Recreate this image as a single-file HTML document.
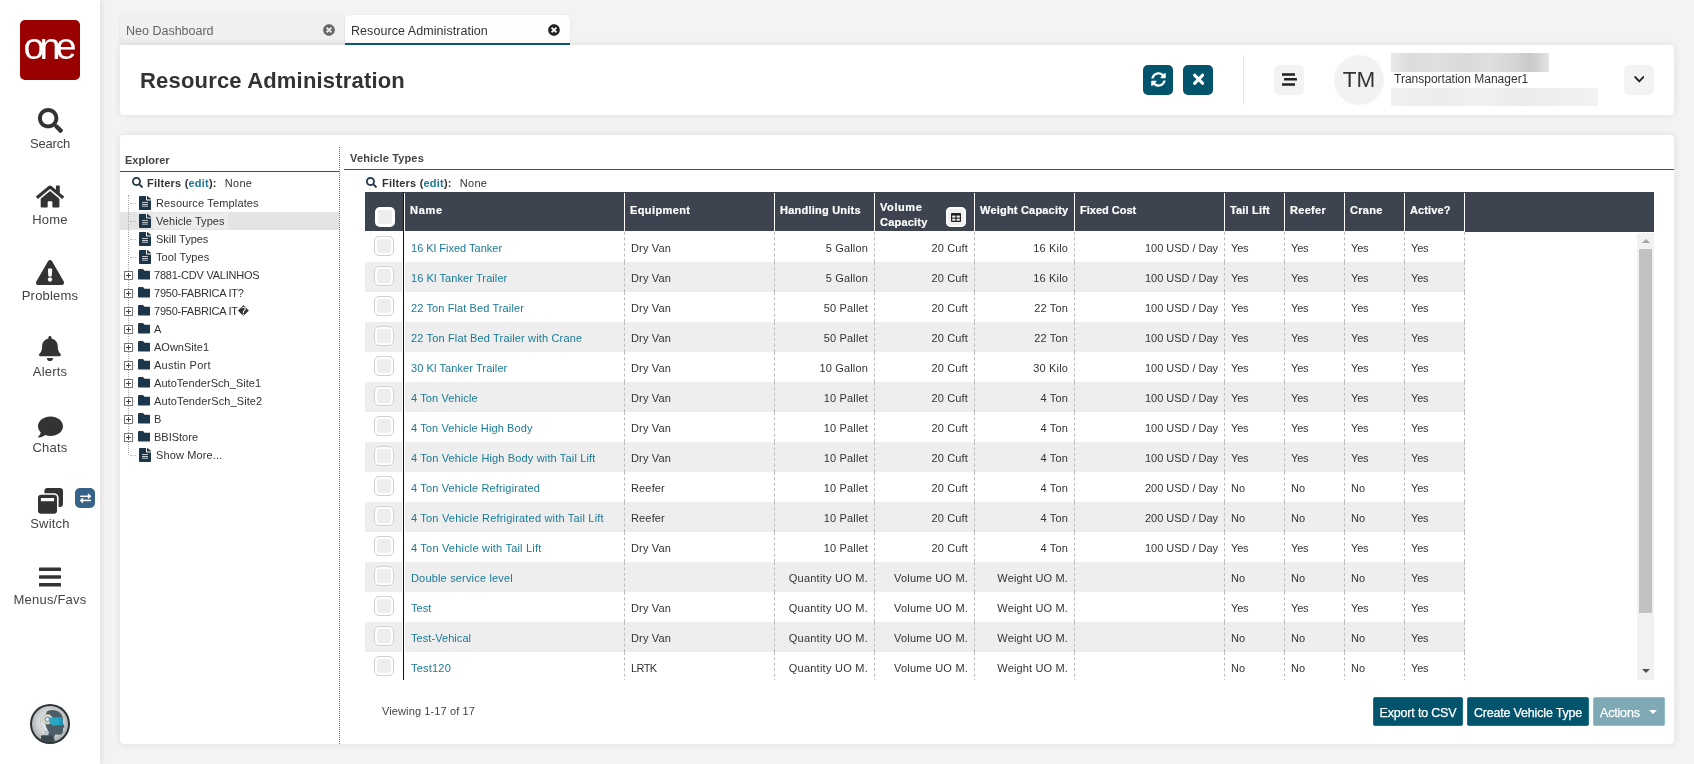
<!DOCTYPE html>
<html lang="en">
<head>
<meta charset="utf-8">
<title>Resource Administration</title>
<style>
*{box-sizing:border-box;margin:0;padding:0}
html,body{width:1694px;height:764px;overflow:hidden}
body{background:#f4f3f3;font-family:"Liberation Sans","DejaVu Sans",sans-serif;color:#333;font-size:11px;position:relative}
i{font-style:normal}
#side,.tab,.card{will-change:transform;opacity:.999}
#side{position:absolute;left:0;top:0;width:100px;height:764px;background:#fff;box-shadow:1px 0 6px rgba(60,40,40,.13)}
#logo{position:absolute;left:20px;top:20px;width:60px;height:60px;background:#990000;border-radius:5px;color:#fff;text-align:center}
#logo span{position:absolute;left:0;width:60px;top:7px;font-size:36px;letter-spacing:-4.7px;line-height:40px;text-indent:-4.7px;transform:scaleX(1.05);transform-origin:30px 50%}
.nav{position:absolute;left:0;width:100px;text-align:center;font-size:13px;color:#444;line-height:16px;letter-spacing:.2px}
.badge{position:absolute;left:75px;top:488px;width:20px;height:20px;border-radius:5px;background:#356388}
.tab{position:absolute;top:15px;height:30px;border-radius:5px 5px 0 0;font-size:12.5px;line-height:32px;padding-left:6px;white-space:nowrap}
#tab1{left:120px;width:224px;background:linear-gradient(#f1f1f1 0,#efefef 80%,#ebebeb 100%);box-shadow:0 0 2px rgba(0,0,0,.12);color:#666}
#tab2{left:345px;width:225px;background:#fff;border-bottom:2px solid #0a5a78;color:#333;box-shadow:0 0 2px rgba(0,0,0,.10);letter-spacing:.06px}
.card{position:absolute;background:#fff;border-radius:4px;box-shadow:0 0 8px rgba(60,40,40,.11)}
#hdr{left:120px;top:45px;width:1554px;height:70px;border-radius:0 4px 4px 4px}
#hdr h1{position:absolute;left:20px;top:22px;font-size:22px;font-weight:700;color:#333;line-height:28px;letter-spacing:.18px;white-space:nowrap}
.ibtn{position:absolute;top:20px;width:30px;height:30px;border-radius:5px}
.teal{background:#01546b}
.lite{background:#f3f3f3}
.vdiv{position:absolute;left:1123px;top:10px;width:1px;height:50px;background:#e9e9e9}
.ava{position:absolute;left:1214px;top:10px;width:50px;height:50px;border-radius:50%;background:#f2f2f2;color:#333;font-size:22.5px;line-height:50px;text-align:center;letter-spacing:0}
.uname{position:absolute;left:1274px;top:26px;font-size:12px;line-height:16px;color:#333;white-space:nowrap}
.blur{position:absolute;left:1271px}
.b1{top:8px;width:158px;height:19px;background:linear-gradient(90deg,#e9e9e9 0,#dcdcdc 12%,#e0e0e0 30%,#d9d9d9 48%,#dedede 62%,#d6d6d6 78%,#c9c9c9 88%,#d4d4d4 94%,#e6e6e6 100%);filter:blur(.7px)}
.b2{top:43px;width:207px;height:18px;background:linear-gradient(90deg,#f0f0f0 0,#ececec 25%,#f1f1f1 42%,#ebebeb 62%,#efefef 80%,#f2f2f2 100%);filter:blur(.7px)}
#main{left:120px;top:135px;width:1554px;height:609px}
.ptitle{position:absolute;font-weight:700;font-size:11px;color:#444;line-height:14px;white-space:nowrap}
.uline{position:absolute;height:1px;background:#17607a}
.vdot{position:absolute;left:219px;top:12px;width:0;height:597px;border-left:1px dotted #777}
.filt{position:absolute;font-size:11px;line-height:14px;color:#333;white-space:nowrap}
.filt b{color:#333;letter-spacing:.2px}
.filt .ed{color:#1a7a96}
.filt .none{margin-left:8px;letter-spacing:.35px}
.tree{position:absolute;left:0;top:59px;width:219px}
.tdot{z-index:2;position:absolute;left:8px;top:1px;width:0;height:260px;border-left:1px dotted #aaa}
.tr{position:relative;height:18px;line-height:18px;font-size:11px;color:#333;white-space:nowrap}
.tr.sel{background:#e4e4e4}
.tr .lbl{position:absolute;left:33px;top:1px;height:16px;line-height:16px;padding:0 3px}
.tr.sel .lbl{background:#ececec}
.tr.f .lbl{left:31px}
.hd{position:absolute;left:10px;top:9px;width:6px;height:0;border-top:1px dotted #bbb}
.hd2{position:absolute;left:14px;top:9px;width:1px;height:1px;background:#ccc}
.pl{z-index:3;position:absolute;left:4px;top:5px;width:9px;height:9px;border:1px solid #777;background:#fff}
.pl:before{content:"";position:absolute;left:1px;top:3px;width:5px;height:1px;background:#444}
.pl:after{content:"";position:absolute;left:3px;top:1px;width:1px;height:5px;background:#444}
#ghead{position:absolute;left:245px;top:57px;width:1289px;height:39px;background:#3d4450}
.hfill{position:absolute;left:1100px;top:0;width:189px;height:40px;background:#3d4450}
.hcb{position:absolute;left:10px;top:15px;width:20px;height:20px;border-radius:5px;background:#fff}
.hcb:after{content:"";position:absolute;left:3px;top:3px;width:14px;height:14px;border-radius:2px;background:#eee}
.hblk{position:absolute;left:38px;top:0;width:1px;height:40px;background:#111}
.hc{position:absolute;top:1px;height:39px;color:#fff;-webkit-text-stroke:.2px #fff;font-weight:700;font-size:11px;line-height:15px;letter-spacing:.3px;border-left:1px solid #fff;white-space:nowrap}
.hc span{position:absolute;left:5px;top:10px}
.hc.two span{top:7px}
.colbtn{position:absolute;left:581px;top:15px;width:20px;height:20px;border-radius:5px;background:#f0f0f0;box-shadow:inset 0 0 0 1.5px #fff}
#gbody{position:absolute;left:245px;top:97px;width:1272px;height:448px;overflow:hidden}
.row{position:absolute;left:0;width:1100px;height:30px;font-size:11px;line-height:32px;letter-spacing:.15px;color:#333;white-space:nowrap}
.row.alt{background:#eeeeee}
.c{position:absolute;top:0;height:30px;padding:0 6px;border-right:1px dashed #bcbcbc}
.c.r{padding-right:6px}
.c.r{text-align:right}
.c.n{color:#1a7a96}
.cb{position:absolute;left:9px;top:4px;width:20px;height:20px;border:1px solid #d2d2d2;border-radius:5px;background:#fff}
.cb i{position:absolute;left:2px;top:2px;width:14px;height:14px;background:#eee;border-radius:2px}
.vline{position:absolute;top:0;height:448px;width:0;border-left:1px dashed #c4c4c4}
.bline{position:absolute;left:38px;top:0;width:1px;height:448px;background:#111}
.wline{position:absolute;top:0;width:1px;height:448px;background:#fff}
#sb{position:absolute;left:1517px;top:98px;width:17px;height:447px;background:#f1f1f1}
#sb .thumb{position:absolute;left:2px;top:16px;width:13px;height:364px;background:#c1c1c1}
#sb .up{position:absolute;left:5px;top:6px;width:0;height:0;border-left:4px solid transparent;border-right:4px solid transparent;border-bottom:4px solid #a3a3a3}
#sb .dn{position:absolute;left:5px;top:436px;width:0;height:0;border-left:4px solid transparent;border-right:4px solid transparent;border-top:4px solid #505050}
.viewing{position:absolute;left:262px;top:569px;font-size:11px;line-height:14px;color:#444;white-space:nowrap}
.btn{position:absolute;top:562px;height:29px;background:#01546b;color:#fff;font-size:12.5px;letter-spacing:-.18px;line-height:31px;text-align:center;border-radius:2px;border:1px solid #16748d;white-space:nowrap;-webkit-text-stroke:.25px #fff}
.btn.dis{background:#7faab5;border-color:#8fbfcb}
.btn.dis span{position:absolute;left:6px;top:0}
.car{position:absolute;right:7px;top:12px;width:0;height:0;border-left:4px solid transparent;border-right:4px solid transparent;border-top:4px solid #fff}
</style>
</head>
<body>
<div id="side">
<div id="logo"><span>one</span></div>
<svg viewBox="0 0 512 512" preserveAspectRatio="none" style="position:absolute;left:37.5px;top:108px;width:25px;height:25px" fill="#333"><path d="M505 442.7L405.3 343c-4.5-4.5-10.6-7-17-7H372c27.6-35.3 44-79.7 44-128C416 93.1 322.9 0 208 0S0 93.1 0 208s93.1 208 208 208c48.3 0 92.7-16.4 128-44v16.3c0 6.4 2.5 12.5 7 17l99.700 99.700c9.400 9.400 24.600 9.400 33.900 0l28.300-28.300c9.400-9.400 9.400-24.600.1-34zM208 336c-70.700 0-128-57.200-128-128 0-70.700 57.200-128 128-128 70.700 0 128 57.200 128 128 0 70.700-57.200 128-128 128z"/></svg>
<div class="nav" style="top:136px;letter-spacing:-.2px">Search</div>
<svg viewBox="0 0 576 512" preserveAspectRatio="none" style="position:absolute;left:35.95px;top:184px;width:28.1px;height:25px" fill="#333"><path d="M280.37 148.26L96 300.11V464a16 16 0 0 0 16 16l112.060-.29a16 16 0 0 0 15.920-16V368a16 16 0 0 1 16-16h64a16 16 0 0 1 16 16v95.640a16 16 0 0 0 16 16.050L464 480a16 16 0 0 0 16-16V300L295.670 148.260a12.190 12.190 0 0 0-15.300 0zM571.600 251.470L488 182.560V44.050a12 12 0 0 0-12-12h-56a12 12 0 0 0-12 12v72.610L318.470 43a48 48 0 0 0-61 0L4.340 251.470a12 12 0 0 0-1.600 16.900l25.500 31A12 12 0 0 0 45.150 301l235.220-193.740a12.190 12.190 0 0 1 15.300 0L530.900 301a12 12 0 0 0 16.900-1.600l25.500-31a12 12 0 0 0-1.700-16.930z"/></svg>
<div class="nav" style="top:212px">Home</div>
<svg viewBox="0 0 576 512" preserveAspectRatio="none" style="position:absolute;left:35.95px;top:260px;width:28.1px;height:25px" fill="#333"><path d="M569.517 440.013C587.975 472.007 564.806 512 527.940 512H48.054c-36.937 0-59.999-40.055-41.577-71.987L246.423 23.985c18.467-32.009 64.720-31.951 83.154 0l239.940 416.028zM288 354c-25.405 0-46 20.595-46 46s20.595 46 46 46 46-20.595 46-46-20.595-46-46-46zm-43.673-165.346l7.418 136c.347 6.364 5.609 11.346 11.982 11.346h48.546c6.373 0 11.635-4.982 11.982-11.346l7.418-136c.375-6.874-5.098-12.654-11.982-12.654h-63.383c-6.884 0-12.356 5.780-11.981 12.654z"/></svg>
<div class="nav" style="top:288px">Problems</div>
<svg viewBox="0 0 448 512" preserveAspectRatio="none" style="position:absolute;left:39.05px;top:336px;width:21.9px;height:25px" fill="#333"><path d="M224 512c35.320 0 63.970-28.650 63.970-64H160.030c0 35.350 28.650 64 63.970 64zm215.390-149.710c-19.320-20.760-55.470-51.990-55.470-154.290 0-77.700-54.480-139.900-127.940-155.160V32c0-17.670-14.320-32-31.980-32s-31.980 14.330-31.980 32v20.840C118.560 68.100 64.080 130.300 64.080 208c0 102.300-36.150 133.530-55.470 154.290-6 6.450-8.660 14.160-8.610 21.710.11 16.400 12.980 32 32.100 32h383.800c19.120 0 32-15.600 32.100-32 .05-7.550-2.610-15.270-8.610-21.710z"/></svg>
<div class="nav" style="top:364px">Alerts</div>
<svg viewBox="0 0 512 512" preserveAspectRatio="none" style="position:absolute;left:37.5px;top:414.8px;width:25px;height:24px" fill="#333"><path d="M256 32C114.600 32 0 125.100 0 240c0 49.600 21.400 95 57 130.700C44.500 421.100 2.700 466 2.200 466.500c-2.200 2.300-2.800 5.700-1.500 8.700S4.800 480 8 480c66.300 0 116-31.800 140.600-51.400 32.700 12.300 69 19.400 107.400 19.400 141.400 0 256-93.100 256-208S397.400 32 256 32z"/></svg>
<div class="nav" style="top:440px">Chats</div>
<svg viewBox="0 0 25 26" style="position:absolute;left:38px;top:488px;width:25px;height:26px"><rect x="6.4" y="0" width="18.6" height="19" rx="3.2" fill="#333"/><rect x="-1.6" y="5.2" width="22.2" height="22.4" rx="4.6" fill="#fff"/><rect x="0" y="6.8" width="19" height="19" rx="3.2" fill="#333"/><rect x="2.9" y="10" width="13.2" height="3.2" fill="#fff"/></svg>
<div class="nav" style="top:516px">Switch</div>
<div class="badge"><svg viewBox="0 0 20 20" style="position:absolute;left:0;top:0;width:20px;height:20px" fill="none" stroke="#fff" stroke-width="1.5"><path d="M5.2 8.300H15"/><path d="M6 12.400H16"/><path d="M13.200 5.800L16.100 8.300L13.200 10.700Z" fill="#fff" stroke-width=".6"/><path d="M7.800 10L5 12.400L7.800 14.900Z" fill="#fff" stroke-width=".6"/></svg></div>
<svg viewBox="0 0 22 20" style="position:absolute;left:39px;top:567px;width:22px;height:20px" fill="#333"><rect x="0" y="0.6" width="22" height="3.4" rx=".6"/><rect x="0" y="8.3" width="22" height="3.4" rx=".6"/><rect x="0" y="16.1" width="22" height="3.4" rx=".6"/></svg>
<div class="nav" style="top:592px">Menus/Favs</div>
<svg viewBox="0 0 40 40" style="position:absolute;left:30px;top:704px;width:40px;height:40px">
<defs><radialGradient id="ag" cx="50%" cy="45%" r="55%"><stop offset="0" stop-color="#f4f4f4"/><stop offset=".6" stop-color="#d6d6d6"/><stop offset="1" stop-color="#a9adaf"/></radialGradient>
<linearGradient id="vg" x1="0" y1="0" x2="1" y2="0"><stop offset="0" stop-color="#3f9fb4"/><stop offset=".6" stop-color="#22a9c9"/><stop offset="1" stop-color="#1b93b6"/></linearGradient>
<clipPath id="ac"><circle cx="20" cy="20" r="18"/></clipPath></defs>
<circle cx="20" cy="20" r="20" fill="#2b3236"/>
<circle cx="20" cy="20" r="18" fill="url(#ag)"/>
<g clip-path="url(#ac)">
<path d="M10.600 16.500C10.600 9.800 16.500 6 22.500 6C29 6 33 10.200 33 16L33 19.500L34.600 23L33 24L33 27.200C33 29.600 31 31 28.500 30.800L25.500 30.300L24 33L25.500 39L10 39L11.500 31.500L15 31.500L15.500 27.500C12.200 24.600 10.600 20.800 10.600 16.500Z" fill="#4b5d66"/>
<path d="M10.600 16.500C10.600 11.500 13.600 8.200 17.500 6.800C15 10 14.400 14 15 18C15.600 22 17 25.200 18.500 27.500L15.500 27.500C12.200 24.600 10.600 20.800 10.600 16.500Z" fill="#dde4e7"/>
<path d="M15.500 27.500L19 27.500L18.300 31.500L15 31.500Z" fill="#c5cdd1"/>
<path d="M10 39L11.500 31.500L22 31.500L25.500 39Z" fill="#3a4850"/>
<circle cx="17.600" cy="15.300" r="5" fill="#dfe3e4" stroke="#b89a58" stroke-width=".6"/>
<circle cx="17.600" cy="15.300" r="3.100" fill="#8fa6b0"/>
<circle cx="17.600" cy="15.300" r="1.600" fill="#e9eef0"/>
<path d="M18.500 13.800L31.800 13.300C32.800 15.500 33 18.500 32.600 21L22.500 21.800C20.500 20.500 19 18 18.500 13.800Z" fill="url(#vg)"/>
</g></svg>
</div>
<div class="tab" id="tab1">Neo Dashboard<svg viewBox="0 0 512 512" preserveAspectRatio="none" style="position:absolute;left:203px;top:9px;width:12px;height:12px" fill="#666"><path d="M256 8C119 8 8 119 8 256s111 248 248 248 248-111 248-248S393 8 256 8zm121.600 313.100c4.700 4.700 4.700 12.300 0 17L338 377.600c-4.700 4.700-12.300 4.700-17 0L256 312l-65.100 65.600c-4.700 4.700-12.300 4.700-17 0L134.400 338c-4.700-4.700-4.700-12.300 0-17l65.600-65-65.600-65.100c-4.700-4.700-4.700-12.300 0-17l39.600-39.600c4.700-4.700 12.300-4.700 17 0l65 65.700 65.100-65.600c4.700-4.700 12.300-4.700 17 0l39.600 39.600c4.700 4.700 4.700 12.300 0 17L312 256l65.600 65.100z"/></svg></div>
<div class="tab" id="tab2">Resource Administration<svg viewBox="0 0 512 512" preserveAspectRatio="none" style="position:absolute;left:203px;top:9px;width:12px;height:12px" fill="#222"><path d="M256 8C119 8 8 119 8 256s111 248 248 248 248-111 248-248S393 8 256 8zm121.600 313.100c4.700 4.700 4.700 12.300 0 17L338 377.600c-4.700 4.700-12.300 4.700-17 0L256 312l-65.100 65.600c-4.700 4.700-12.300 4.700-17 0L134.400 338c-4.700-4.700-4.700-12.300 0-17l65.600-65-65.600-65.100c-4.700-4.700-4.700-12.300 0-17l39.600-39.600c4.700-4.700 12.300-4.700 17 0l65 65.700 65.100-65.600c4.700-4.700 12.300-4.700 17 0l39.600 39.600c4.700 4.700 4.700 12.300 0 17L312 256l65.600 65.100z"/></svg></div>
<div class="card" id="hdr"><h1>Resource Administration</h1>
<div class="ibtn teal" style="left:1023px"><svg viewBox="0 0 512 512" preserveAspectRatio="none" style="position:absolute;left:7.5px;top:6.9px;width:15px;height:15px" fill="#fff"><path d="M370.720 133.280C339.458 104.008 298.888 87.962 255.848 88c-77.458.068-144.328 53.178-162.791 126.850-1.344 5.363-6.122 9.150-11.651 9.150H24.103c-7.498 0-13.194-6.807-11.807-14.176C33.933 94.924 134.813 8 256 8c66.448 0 126.791 26.136 171.315 68.685L463.030 40.970C478.149 25.851 504 36.559 504 57.941V192c0 13.255-10.745 24-24 24H345.941c-21.382 0-32.090-25.851-16.971-40.971l41.750-41.749zM32 296h134.059c21.382 0 32.090 25.851 16.971 40.971l-41.750 41.750c31.262 29.273 71.835 45.319 114.876 45.280 77.418-.070 144.315-53.144 162.787-126.849 1.344-5.363 6.122-9.150 11.651-9.150h57.304c7.498 0 13.194 6.807 11.807 14.176C478.067 417.076 377.187 504 256 504c-66.448 0-126.791-26.136-171.315-68.685L48.970 471.030C33.851 486.149 8 475.441 8 454.059V320c0-13.255 10.745-24 24-24z"/></svg></div>
<div class="ibtn teal" style="left:1063px"><svg viewBox="0 0 352 512" preserveAspectRatio="none" style="position:absolute;left:9.8px;top:6.35px;width:11.3px;height:16.5px" fill="#fff"><path d="M242.720 256l100.070-100.070c12.280-12.280 12.280-32.190 0-44.480l-22.240-22.240c-12.280-12.280-32.190-12.280-44.480 0L176 189.280 75.930 89.210c-12.280-12.280-32.190-12.280-44.480 0L9.210 111.450c-12.280 12.280-12.280 32.190 0 44.480L109.280 256 9.210 356.070c-12.280 12.280-12.280 32.190 0 44.480l22.240 22.240c12.280 12.280 32.200 12.280 44.480 0L176 322.720l100.070 100.070c12.280 12.280 32.200 12.280 44.480 0l22.240-22.240c12.280-12.280 12.280-32.190 0-44.480L242.720 256z"/></svg></div>
<div class="vdiv"></div>
<div class="ibtn lite" style="left:1154px"><svg viewBox="0 0 30 30" style="position:absolute;left:0;top:0;width:30px;height:30px" fill="#222"><rect x="8" y="8.300" width="13" height="2.500" rx=".3"/><rect x="10" y="13.100" width="13" height="2.500" rx=".3"/><rect x="8" y="18.300" width="13" height="2.500" rx=".3"/></svg></div>
<div class="ava">TM</div>
<div class="blur b1"></div><div class="uname">Transportation Manager1</div><div class="blur b2"></div>
<div class="ibtn lite" style="left:1504px"><svg viewBox="0 0 448 512" preserveAspectRatio="none" style="position:absolute;left:9.7px;top:8.4px;width:10.6px;height:12.4px" fill="#222"><path d="M207.029 381.476L12.686 187.132c-9.373-9.373-9.373-24.569 0-33.941l22.667-22.667c9.357-9.357 24.522-9.375 33.901-.04L224 284.505l154.745-154.021c9.379-9.335 24.544-9.317 33.901.04l22.667 22.667c9.373 9.373 9.373 24.569 0 33.941L240.971 381.476c-9.373 9.372-24.569 9.372-33.942 0z"/></svg></div>
</div>
<div class="card" id="main">
<div class="ptitle" style="left:5px;top:18px">Explorer</div>
<div class="uline" style="left:0;top:36px;width:219px"></div>
<div class="vdot"></div>
<div class="filt" style="left:27px;top:41px"><svg viewBox="0 0 512 512" preserveAspectRatio="none" style="position:absolute;left:-15.5px;top:0.7px;width:11px;height:11px" fill="#1d3549"><path d="M505 442.7L405.3 343c-4.5-4.5-10.6-7-17-7H372c27.6-35.3 44-79.7 44-128C416 93.1 322.9 0 208 0S0 93.1 0 208s93.1 208 208 208c48.3 0 92.7-16.4 128-44v16.3c0 6.4 2.5 12.5 7 17l99.700 99.700c9.400 9.400 24.600 9.400 33.900 0l28.300-28.300c9.400-9.400 9.400-24.600.1-34zM208 336c-70.700 0-128-57.200-128-128 0-70.700 57.200-128 128-128 70.700 0 128 57.200 128 128 0 70.700-57.200 128-128 128z"/></svg><b>Filters (<span class="ed">edit</span>):</b><span class="none">None</span></div>
<div class="tree">
<div class="tdot"></div>
<div class="tr"><i class="hd"></i><svg viewBox="0 0 384 512" preserveAspectRatio="none" style="position:absolute;left:19px;top:2px;width:12px;height:14px" fill="#1d3549"><path d="M224 136V0H24C10.700 0 0 10.700 0 24v464c0 13.300 10.700 24 24 24h336c13.300 0 24-10.700 24-24V160H248c-13.200 0-24-10.800-24-24zm64 236c0 6.600-5.400 12-12 12H108c-6.600 0-12-5.400-12-12v-8c0-6.600 5.400-12 12-12h168c6.600 0 12 5.400 12 12v8zm0-64c0 6.600-5.400 12-12 12H108c-6.600 0-12-5.400-12-12v-8c0-6.600 5.400-12 12-12h168c6.600 0 12 5.400 12 12v8zm0-72v8c0 6.600-5.400 12-12 12H108c-6.600 0-12-5.400-12-12v-8c0-6.600 5.400-12 12-12h168c6.600 0 12 5.400 12 12zm96-114.100v6.100H256V0h6.100c6.400 0 12.500 2.500 17 7l97.900 98c4.500 4.500 7 10.600 7 16.900z"/></svg><span class="lbl" style="letter-spacing:0.15px">Resource Templates</span></div>
<div class="tr sel"><i class="hd"></i><svg viewBox="0 0 384 512" preserveAspectRatio="none" style="position:absolute;left:19px;top:2px;width:12px;height:14px" fill="#1d3549"><path d="M224 136V0H24C10.700 0 0 10.700 0 24v464c0 13.300 10.700 24 24 24h336c13.300 0 24-10.700 24-24V160H248c-13.200 0-24-10.800-24-24zm64 236c0 6.600-5.400 12-12 12H108c-6.600 0-12-5.400-12-12v-8c0-6.600 5.400-12 12-12h168c6.600 0 12 5.400 12 12v8zm0-64c0 6.600-5.400 12-12 12H108c-6.600 0-12-5.400-12-12v-8c0-6.600 5.400-12 12-12h168c6.600 0 12 5.400 12 12v8zm0-72v8c0 6.600-5.400 12-12 12H108c-6.600 0-12-5.400-12-12v-8c0-6.600 5.400-12 12-12h168c6.600 0 12 5.400 12 12zm96-114.100v6.100H256V0h6.100c6.400 0 12.500 2.500 17 7l97.900 98c4.500 4.500 7 10.600 7 16.900z"/></svg><span class="lbl" style="letter-spacing:0.07px">Vehicle Types</span></div>
<div class="tr"><i class="hd"></i><svg viewBox="0 0 384 512" preserveAspectRatio="none" style="position:absolute;left:19px;top:2px;width:12px;height:14px" fill="#1d3549"><path d="M224 136V0H24C10.700 0 0 10.700 0 24v464c0 13.300 10.700 24 24 24h336c13.300 0 24-10.700 24-24V160H248c-13.200 0-24-10.800-24-24zm64 236c0 6.600-5.400 12-12 12H108c-6.600 0-12-5.400-12-12v-8c0-6.600 5.400-12 12-12h168c6.600 0 12 5.400 12 12v8zm0-64c0 6.600-5.400 12-12 12H108c-6.600 0-12-5.400-12-12v-8c0-6.600 5.400-12 12-12h168c6.600 0 12 5.400 12 12v8zm0-72v8c0 6.600-5.400 12-12 12H108c-6.600 0-12-5.400-12-12v-8c0-6.600 5.400-12 12-12h168c6.600 0 12 5.400 12 12zm96-114.100v6.100H256V0h6.100c6.400 0 12.500 2.500 17 7l97.900 98c4.500 4.500 7 10.600 7 16.900z"/></svg><span class="lbl" style="letter-spacing:0px">Skill Types</span></div>
<div class="tr"><i class="hd"></i><svg viewBox="0 0 384 512" preserveAspectRatio="none" style="position:absolute;left:19px;top:2px;width:12px;height:14px" fill="#1d3549"><path d="M224 136V0H24C10.700 0 0 10.700 0 24v464c0 13.300 10.700 24 24 24h336c13.300 0 24-10.700 24-24V160H248c-13.200 0-24-10.800-24-24zm64 236c0 6.600-5.400 12-12 12H108c-6.600 0-12-5.400-12-12v-8c0-6.600 5.400-12 12-12h168c6.600 0 12 5.400 12 12v8zm0-64c0 6.600-5.400 12-12 12H108c-6.600 0-12-5.400-12-12v-8c0-6.600 5.400-12 12-12h168c6.600 0 12 5.400 12 12v8zm0-72v8c0 6.600-5.400 12-12 12H108c-6.600 0-12-5.400-12-12v-8c0-6.600 5.400-12 12-12h168c6.600 0 12 5.400 12 12zm96-114.100v6.100H256V0h6.100c6.400 0 12.500 2.500 17 7l97.900 98c4.500 4.500 7 10.600 7 16.900z"/></svg><span class="lbl" style="letter-spacing:0.1px">Tool Types</span></div>
<div class="tr f"><i class="pl"></i><i class="hd2"></i><svg viewBox="0 64 512 384" preserveAspectRatio="none" style="position:absolute;left:18px;top:3.300px;width:12.300px;height:10.600px" fill="#1d3549"><path d="M464 128H272l-64-64H48C21.490 64 0 85.490 0 112v288c0 26.510 21.490 48 48 48h416c26.510 0 48-21.490 48-48V176c0-26.510-21.490-48-48-48z"/></svg><span class="lbl" style="letter-spacing:-0.22px">7881-CDV VALINHOS</span></div>
<div class="tr f"><i class="pl"></i><i class="hd2"></i><svg viewBox="0 64 512 384" preserveAspectRatio="none" style="position:absolute;left:18px;top:3.300px;width:12.300px;height:10.600px" fill="#1d3549"><path d="M464 128H272l-64-64H48C21.490 64 0 85.490 0 112v288c0 26.510 21.490 48 48 48h416c26.510 0 48-21.490 48-48V176c0-26.510-21.490-48-48-48z"/></svg><span class="lbl" style="letter-spacing:-0.24px">7950-FABRICA IT?</span></div>
<div class="tr f"><i class="pl"></i><i class="hd2"></i><svg viewBox="0 64 512 384" preserveAspectRatio="none" style="position:absolute;left:18px;top:3.300px;width:12.300px;height:10.600px" fill="#1d3549"><path d="M464 128H272l-64-64H48C21.490 64 0 85.490 0 112v288c0 26.510 21.490 48 48 48h416c26.510 0 48-21.490 48-48V176c0-26.510-21.490-48-48-48z"/></svg><span class="lbl" style="letter-spacing:-0.24px">7950-FABRICA IT�</span></div>
<div class="tr f"><i class="pl"></i><i class="hd2"></i><svg viewBox="0 64 512 384" preserveAspectRatio="none" style="position:absolute;left:18px;top:3.300px;width:12.300px;height:10.600px" fill="#1d3549"><path d="M464 128H272l-64-64H48C21.490 64 0 85.490 0 112v288c0 26.510 21.490 48 48 48h416c26.510 0 48-21.490 48-48V176c0-26.510-21.490-48-48-48z"/></svg><span class="lbl" style="letter-spacing:0px">A</span></div>
<div class="tr f"><i class="pl"></i><i class="hd2"></i><svg viewBox="0 64 512 384" preserveAspectRatio="none" style="position:absolute;left:18px;top:3.300px;width:12.300px;height:10.600px" fill="#1d3549"><path d="M464 128H272l-64-64H48C21.490 64 0 85.490 0 112v288c0 26.510 21.490 48 48 48h416c26.510 0 48-21.490 48-48V176c0-26.510-21.490-48-48-48z"/></svg><span class="lbl" style="letter-spacing:0px">AOwnSite1</span></div>
<div class="tr f"><i class="pl"></i><i class="hd2"></i><svg viewBox="0 64 512 384" preserveAspectRatio="none" style="position:absolute;left:18px;top:3.300px;width:12.300px;height:10.600px" fill="#1d3549"><path d="M464 128H272l-64-64H48C21.490 64 0 85.490 0 112v288c0 26.510 21.490 48 48 48h416c26.510 0 48-21.490 48-48V176c0-26.510-21.490-48-48-48z"/></svg><span class="lbl" style="letter-spacing:0.27px">Austin Port</span></div>
<div class="tr f"><i class="pl"></i><i class="hd2"></i><svg viewBox="0 64 512 384" preserveAspectRatio="none" style="position:absolute;left:18px;top:3.300px;width:12.300px;height:10.600px" fill="#1d3549"><path d="M464 128H272l-64-64H48C21.490 64 0 85.490 0 112v288c0 26.510 21.490 48 48 48h416c26.510 0 48-21.490 48-48V176c0-26.510-21.490-48-48-48z"/></svg><span class="lbl" style="letter-spacing:0.04px">AutoTenderSch_Site1</span></div>
<div class="tr f"><i class="pl"></i><i class="hd2"></i><svg viewBox="0 64 512 384" preserveAspectRatio="none" style="position:absolute;left:18px;top:3.300px;width:12.300px;height:10.600px" fill="#1d3549"><path d="M464 128H272l-64-64H48C21.490 64 0 85.490 0 112v288c0 26.510 21.490 48 48 48h416c26.510 0 48-21.490 48-48V176c0-26.510-21.490-48-48-48z"/></svg><span class="lbl" style="letter-spacing:0.1px">AutoTenderSch_Site2</span></div>
<div class="tr f"><i class="pl"></i><i class="hd2"></i><svg viewBox="0 64 512 384" preserveAspectRatio="none" style="position:absolute;left:18px;top:3.300px;width:12.300px;height:10.600px" fill="#1d3549"><path d="M464 128H272l-64-64H48C21.490 64 0 85.490 0 112v288c0 26.510 21.490 48 48 48h416c26.510 0 48-21.490 48-48V176c0-26.510-21.490-48-48-48z"/></svg><span class="lbl" style="letter-spacing:0px">B</span></div>
<div class="tr f"><i class="pl"></i><i class="hd2"></i><svg viewBox="0 64 512 384" preserveAspectRatio="none" style="position:absolute;left:18px;top:3.300px;width:12.300px;height:10.600px" fill="#1d3549"><path d="M464 128H272l-64-64H48C21.490 64 0 85.490 0 112v288c0 26.510 21.490 48 48 48h416c26.510 0 48-21.490 48-48V176c0-26.510-21.490-48-48-48z"/></svg><span class="lbl" style="letter-spacing:0px">BBIStore</span></div>
<div class="tr"><i class="hd"></i><svg viewBox="0 0 384 512" preserveAspectRatio="none" style="position:absolute;left:19px;top:2px;width:12px;height:14px" fill="#1d3549"><path d="M224 136V0H24C10.700 0 0 10.700 0 24v464c0 13.300 10.700 24 24 24h336c13.300 0 24-10.700 24-24V160H248c-13.200 0-24-10.800-24-24zm64 236c0 6.600-5.400 12-12 12H108c-6.600 0-12-5.400-12-12v-8c0-6.600 5.400-12 12-12h168c6.600 0 12 5.400 12 12v8zm0-64c0 6.600-5.400 12-12 12H108c-6.600 0-12-5.400-12-12v-8c0-6.600 5.400-12 12-12h168c6.600 0 12 5.400 12 12v8zm0-72v8c0 6.600-5.400 12-12 12H108c-6.600 0-12-5.400-12-12v-8c0-6.600 5.400-12 12-12h168c6.600 0 12 5.400 12 12zm96-114.100v6.100H256V0h6.100c6.400 0 12.500 2.500 17 7l97.900 98c4.500 4.500 7 10.600 7 16.900z"/></svg><span class="lbl" style="letter-spacing:.13px">Show More...</span></div>
</div>
<div class="ptitle" style="left:230px;top:16px;letter-spacing:.15px">Vehicle Types</div>
<div class="uline" style="left:224px;top:34px;width:1330px"></div>
<div class="filt" style="left:262px;top:41px"><svg viewBox="0 0 512 512" preserveAspectRatio="none" style="position:absolute;left:-16px;top:0.7px;width:11px;height:11px" fill="#1d3549"><path d="M505 442.7L405.3 343c-4.5-4.5-10.6-7-17-7H372c27.6-35.3 44-79.7 44-128C416 93.1 322.9 0 208 0S0 93.1 0 208s93.1 208 208 208c48.3 0 92.7-16.4 128-44v16.3c0 6.4 2.5 12.5 7 17l99.700 99.700c9.400 9.400 24.600 9.400 33.900 0l28.300-28.300c9.400-9.400 9.400-24.600.1-34zM208 336c-70.700 0-128-57.200-128-128 0-70.700 57.200-128 128-128 70.700 0 128 57.200 128 128 0 70.700-57.200 128-128 128z"/></svg><b>Filters (<span class="ed">edit</span>):</b><span class="none">None</span></div>
<div id="ghead"><div class="hfill"></div><div class="hcb"></div><div class="hblk"></div>
<div class="hc first" style="left:39px;width:220px;letter-spacing:0.7px"><span>Name</span></div>
<div class="hc" style="left:259px;width:150px;letter-spacing:0.4px"><span>Equipment</span></div>
<div class="hc" style="left:409px;width:100px;letter-spacing:0.23px"><span>Handling Units</span></div>
<div class="hc two" style="left:509px;width:100px;letter-spacing:0px"><span><i style="letter-spacing:.58px">Volume</i><br><i style="letter-spacing:.2px">Capacity</i></span></div>
<div class="hc" style="left:609px;width:100px;letter-spacing:0.2px"><span>Weight Capacity</span></div>
<div class="hc" style="left:709px;width:150px;letter-spacing:0px"><span>Fixed Cost</span></div>
<div class="hc" style="left:859px;width:60px;letter-spacing:0.17px"><span>Tail Lift</span></div>
<div class="hc" style="left:919px;width:60px;letter-spacing:0.3px"><span>Reefer</span></div>
<div class="hc" style="left:979px;width:60px;letter-spacing:0.3px"><span>Crane</span></div>
<div class="hc" style="left:1039px;width:60px;letter-spacing:0.13px"><span>Active?</span></div>
<div class="hc" style="left:1099px;width:1px"></div>
<div class="colbtn"><svg viewBox="0 0 10 9" style="position:absolute;left:5px;top:5.500px;width:10px;height:9px"><rect x="0" y="0" width="10" height="9" rx="1" fill="#222"/><rect x="1.200" y="2.600" width="3.200" height="2" fill="#f0f0f0"/><rect x="5.600" y="2.600" width="3.200" height="2" fill="#f0f0f0"/><rect x="1.200" y="5.700" width="3.200" height="2" fill="#f0f0f0"/><rect x="5.600" y="5.700" width="3.200" height="2" fill="#f0f0f0"/></svg></div>
</div>
<div id="gbody">
<div class="row" style="top:0px;height:30px"><div class="cb"><i></i></div>
<div class="c n" style="left:40px;width:220px;letter-spacing:0.011px">16 Kl Fixed Tanker</div>
<div class="c" style="left:260px;width:150px">Dry Van</div>
<div class="c r" style="left:410px;width:100px">5 Gallon</div>
<div class="c r" style="left:510px;width:100px">20 Cuft</div>
<div class="c r" style="left:610px;width:100px">16 Kilo</div>
<div class="c r" style="left:710px;width:150px;letter-spacing:-0.03px">100 USD / Day</div>
<div class="c" style="left:860px;width:60px;letter-spacing:-0.2px">Yes</div>
<div class="c" style="left:920px;width:60px;letter-spacing:-0.2px">Yes</div>
<div class="c" style="left:980px;width:60px;letter-spacing:-0.2px">Yes</div>
<div class="c" style="left:1040px;width:60px;letter-spacing:-0.2px">Yes</div>
</div>
<div class="row alt" style="top:30px;height:30px"><div class="cb"><i></i></div>
<div class="c n" style="left:40px;width:220px;letter-spacing:0.09px">16 Kl Tanker Trailer</div>
<div class="c" style="left:260px;width:150px">Dry Van</div>
<div class="c r" style="left:410px;width:100px">5 Gallon</div>
<div class="c r" style="left:510px;width:100px">20 Cuft</div>
<div class="c r" style="left:610px;width:100px">16 Kilo</div>
<div class="c r" style="left:710px;width:150px;letter-spacing:-0.03px">100 USD / Day</div>
<div class="c" style="left:860px;width:60px;letter-spacing:-0.2px">Yes</div>
<div class="c" style="left:920px;width:60px;letter-spacing:-0.2px">Yes</div>
<div class="c" style="left:980px;width:60px;letter-spacing:-0.2px">Yes</div>
<div class="c" style="left:1040px;width:60px;letter-spacing:-0.2px">Yes</div>
</div>
<div class="row" style="top:60px;height:30px"><div class="cb"><i></i></div>
<div class="c n" style="left:40px;width:220px;letter-spacing:0.107px">22 Ton Flat Bed Trailer</div>
<div class="c" style="left:260px;width:150px">Dry Van</div>
<div class="c r" style="left:410px;width:100px">50 Pallet</div>
<div class="c r" style="left:510px;width:100px">20 Cuft</div>
<div class="c r" style="left:610px;width:100px">22 Ton</div>
<div class="c r" style="left:710px;width:150px;letter-spacing:-0.03px">100 USD / Day</div>
<div class="c" style="left:860px;width:60px;letter-spacing:-0.2px">Yes</div>
<div class="c" style="left:920px;width:60px;letter-spacing:-0.2px">Yes</div>
<div class="c" style="left:980px;width:60px;letter-spacing:-0.2px">Yes</div>
<div class="c" style="left:1040px;width:60px;letter-spacing:-0.2px">Yes</div>
</div>
<div class="row alt" style="top:90px;height:30px"><div class="cb"><i></i></div>
<div class="c n" style="left:40px;width:220px">22 Ton Flat Bed Trailer with Crane</div>
<div class="c" style="left:260px;width:150px">Dry Van</div>
<div class="c r" style="left:410px;width:100px">50 Pallet</div>
<div class="c r" style="left:510px;width:100px">20 Cuft</div>
<div class="c r" style="left:610px;width:100px">22 Ton</div>
<div class="c r" style="left:710px;width:150px;letter-spacing:-0.03px">100 USD / Day</div>
<div class="c" style="left:860px;width:60px;letter-spacing:-0.2px">Yes</div>
<div class="c" style="left:920px;width:60px;letter-spacing:-0.2px">Yes</div>
<div class="c" style="left:980px;width:60px;letter-spacing:-0.2px">Yes</div>
<div class="c" style="left:1040px;width:60px;letter-spacing:-0.2px">Yes</div>
</div>
<div class="row" style="top:120px;height:30px"><div class="cb"><i></i></div>
<div class="c n" style="left:40px;width:220px;letter-spacing:0.09px">30 Kl Tanker Trailer</div>
<div class="c" style="left:260px;width:150px">Dry Van</div>
<div class="c r" style="left:410px;width:100px">10 Gallon</div>
<div class="c r" style="left:510px;width:100px">20 Cuft</div>
<div class="c r" style="left:610px;width:100px">30 Kilo</div>
<div class="c r" style="left:710px;width:150px;letter-spacing:-0.03px">100 USD / Day</div>
<div class="c" style="left:860px;width:60px;letter-spacing:-0.2px">Yes</div>
<div class="c" style="left:920px;width:60px;letter-spacing:-0.2px">Yes</div>
<div class="c" style="left:980px;width:60px;letter-spacing:-0.2px">Yes</div>
<div class="c" style="left:1040px;width:60px;letter-spacing:-0.2px">Yes</div>
</div>
<div class="row alt" style="top:150px;height:30px"><div class="cb"><i></i></div>
<div class="c n" style="left:40px;width:220px;letter-spacing:0.112px">4 Ton Vehicle</div>
<div class="c" style="left:260px;width:150px">Dry Van</div>
<div class="c r" style="left:410px;width:100px">10 Pallet</div>
<div class="c r" style="left:510px;width:100px">20 Cuft</div>
<div class="c r" style="left:610px;width:100px">4 Ton</div>
<div class="c r" style="left:710px;width:150px;letter-spacing:-0.03px">100 USD / Day</div>
<div class="c" style="left:860px;width:60px;letter-spacing:-0.2px">Yes</div>
<div class="c" style="left:920px;width:60px;letter-spacing:-0.2px">Yes</div>
<div class="c" style="left:980px;width:60px;letter-spacing:-0.2px">Yes</div>
<div class="c" style="left:1040px;width:60px;letter-spacing:-0.2px">Yes</div>
</div>
<div class="row" style="top:180px;height:30px"><div class="cb"><i></i></div>
<div class="c n" style="left:40px;width:220px;letter-spacing:0.111px">4 Ton Vehicle High Body</div>
<div class="c" style="left:260px;width:150px">Dry Van</div>
<div class="c r" style="left:410px;width:100px">10 Pallet</div>
<div class="c r" style="left:510px;width:100px">20 Cuft</div>
<div class="c r" style="left:610px;width:100px">4 Ton</div>
<div class="c r" style="left:710px;width:150px;letter-spacing:-0.03px">100 USD / Day</div>
<div class="c" style="left:860px;width:60px;letter-spacing:-0.2px">Yes</div>
<div class="c" style="left:920px;width:60px;letter-spacing:-0.2px">Yes</div>
<div class="c" style="left:980px;width:60px;letter-spacing:-0.2px">Yes</div>
<div class="c" style="left:1040px;width:60px;letter-spacing:-0.2px">Yes</div>
</div>
<div class="row alt" style="top:210px;height:30px"><div class="cb"><i></i></div>
<div class="c n" style="left:40px;width:220px">4 Ton Vehicle High Body with Tail Lift</div>
<div class="c" style="left:260px;width:150px">Dry Van</div>
<div class="c r" style="left:410px;width:100px">10 Pallet</div>
<div class="c r" style="left:510px;width:100px">20 Cuft</div>
<div class="c r" style="left:610px;width:100px">4 Ton</div>
<div class="c r" style="left:710px;width:150px;letter-spacing:-0.03px">100 USD / Day</div>
<div class="c" style="left:860px;width:60px;letter-spacing:-0.2px">Yes</div>
<div class="c" style="left:920px;width:60px;letter-spacing:-0.2px">Yes</div>
<div class="c" style="left:980px;width:60px;letter-spacing:-0.2px">Yes</div>
<div class="c" style="left:1040px;width:60px;letter-spacing:-0.2px">Yes</div>
</div>
<div class="row" style="top:240px;height:30px"><div class="cb"><i></i></div>
<div class="c n" style="left:40px;width:220px">4 Ton Vehicle Refrigirated</div>
<div class="c" style="left:260px;width:150px">Reefer</div>
<div class="c r" style="left:410px;width:100px">10 Pallet</div>
<div class="c r" style="left:510px;width:100px">20 Cuft</div>
<div class="c r" style="left:610px;width:100px">4 Ton</div>
<div class="c r" style="left:710px;width:150px;letter-spacing:-0.03px">200 USD / Day</div>
<div class="c" style="left:860px;width:60px">No</div>
<div class="c" style="left:920px;width:60px">No</div>
<div class="c" style="left:980px;width:60px">No</div>
<div class="c" style="left:1040px;width:60px;letter-spacing:-0.2px">Yes</div>
</div>
<div class="row alt" style="top:270px;height:30px"><div class="cb"><i></i></div>
<div class="c n" style="left:40px;width:220px;letter-spacing:0.194px">4 Ton Vehicle Refrigirated with Tail Lift</div>
<div class="c" style="left:260px;width:150px">Reefer</div>
<div class="c r" style="left:410px;width:100px">10 Pallet</div>
<div class="c r" style="left:510px;width:100px">20 Cuft</div>
<div class="c r" style="left:610px;width:100px">4 Ton</div>
<div class="c r" style="left:710px;width:150px;letter-spacing:-0.03px">200 USD / Day</div>
<div class="c" style="left:860px;width:60px">No</div>
<div class="c" style="left:920px;width:60px">No</div>
<div class="c" style="left:980px;width:60px">No</div>
<div class="c" style="left:1040px;width:60px;letter-spacing:-0.2px">Yes</div>
</div>
<div class="row" style="top:300px;height:30px"><div class="cb"><i></i></div>
<div class="c n" style="left:40px;width:220px;letter-spacing:0.196px">4 Ton Vehicle with Tail Lift</div>
<div class="c" style="left:260px;width:150px">Dry Van</div>
<div class="c r" style="left:410px;width:100px">10 Pallet</div>
<div class="c r" style="left:510px;width:100px">20 Cuft</div>
<div class="c r" style="left:610px;width:100px">4 Ton</div>
<div class="c r" style="left:710px;width:150px;letter-spacing:-0.03px">100 USD / Day</div>
<div class="c" style="left:860px;width:60px;letter-spacing:-0.2px">Yes</div>
<div class="c" style="left:920px;width:60px;letter-spacing:-0.2px">Yes</div>
<div class="c" style="left:980px;width:60px;letter-spacing:-0.2px">Yes</div>
<div class="c" style="left:1040px;width:60px;letter-spacing:-0.2px">Yes</div>
</div>
<div class="row alt" style="top:330px;height:30px"><div class="cb"><i></i></div>
<div class="c n" style="left:40px;width:220px;letter-spacing:0.175px">Double service level</div>
<div class="c" style="left:260px;width:150px"></div>
<div class="c r" style="left:410px;width:100px;letter-spacing:0.25px">Quantity UO M.</div>
<div class="c r" style="left:510px;width:100px;letter-spacing:0.2px">Volume UO M.</div>
<div class="c r" style="left:610px;width:100px">Weight UO M.</div>
<div class="c r" style="left:710px;width:150px"></div>
<div class="c" style="left:860px;width:60px">No</div>
<div class="c" style="left:920px;width:60px">No</div>
<div class="c" style="left:980px;width:60px">No</div>
<div class="c" style="left:1040px;width:60px;letter-spacing:-0.2px">Yes</div>
</div>
<div class="row" style="top:360px;height:30px"><div class="cb"><i></i></div>
<div class="c n" style="left:40px;width:220px;letter-spacing:0.05px">Test</div>
<div class="c" style="left:260px;width:150px">Dry Van</div>
<div class="c r" style="left:410px;width:100px;letter-spacing:0.25px">Quantity UO M.</div>
<div class="c r" style="left:510px;width:100px;letter-spacing:0.2px">Volume UO M.</div>
<div class="c r" style="left:610px;width:100px">Weight UO M.</div>
<div class="c r" style="left:710px;width:150px"></div>
<div class="c" style="left:860px;width:60px;letter-spacing:-0.2px">Yes</div>
<div class="c" style="left:920px;width:60px;letter-spacing:-0.2px">Yes</div>
<div class="c" style="left:980px;width:60px;letter-spacing:-0.2px">Yes</div>
<div class="c" style="left:1040px;width:60px;letter-spacing:-0.2px">Yes</div>
</div>
<div class="row alt" style="top:390px;height:30px"><div class="cb"><i></i></div>
<div class="c n" style="left:40px;width:220px;letter-spacing:0.067px">Test-Vehical</div>
<div class="c" style="left:260px;width:150px">Dry Van</div>
<div class="c r" style="left:410px;width:100px;letter-spacing:0.25px">Quantity UO M.</div>
<div class="c r" style="left:510px;width:100px;letter-spacing:0.2px">Volume UO M.</div>
<div class="c r" style="left:610px;width:100px">Weight UO M.</div>
<div class="c r" style="left:710px;width:150px"></div>
<div class="c" style="left:860px;width:60px">No</div>
<div class="c" style="left:920px;width:60px">No</div>
<div class="c" style="left:980px;width:60px">No</div>
<div class="c" style="left:1040px;width:60px;letter-spacing:-0.2px">Yes</div>
</div>
<div class="row" style="top:420px;height:28px"><div class="cb"><i></i></div>
<div class="c n" style="left:40px;width:220px;letter-spacing:0.207px">Test120</div>
<div class="c" style="left:260px;width:150px;letter-spacing:-0.6px">LRTK</div>
<div class="c r" style="left:410px;width:100px;letter-spacing:0.25px">Quantity UO M.</div>
<div class="c r" style="left:510px;width:100px;letter-spacing:0.2px">Volume UO M.</div>
<div class="c r" style="left:610px;width:100px">Weight UO M.</div>
<div class="c r" style="left:710px;width:150px"></div>
<div class="c" style="left:860px;width:60px">No</div>
<div class="c" style="left:920px;width:60px">No</div>
<div class="c" style="left:980px;width:60px">No</div>
<div class="c" style="left:1040px;width:60px;letter-spacing:-0.2px">Yes</div>
</div>
<div class="bline"></div><div class="wline" style="left:37px"></div><div class="wline" style="left:39px"></div>
</div>
<div id="sb"><div class="thumb"></div><div class="up"></div><div class="dn"></div></div>
<div class="viewing" style="letter-spacing:.12px">Viewing 1-17 of 17</div>
<div class="btn" style="left:1253px;width:90px">Export to CSV</div>
<div class="btn" style="left:1347px;width:122px">Create Vehicle Type</div>
<div class="btn dis" style="left:1473px;width:72px"><span>Actions</span><i class="car"></i></div>
</div>
</body>
</html>
